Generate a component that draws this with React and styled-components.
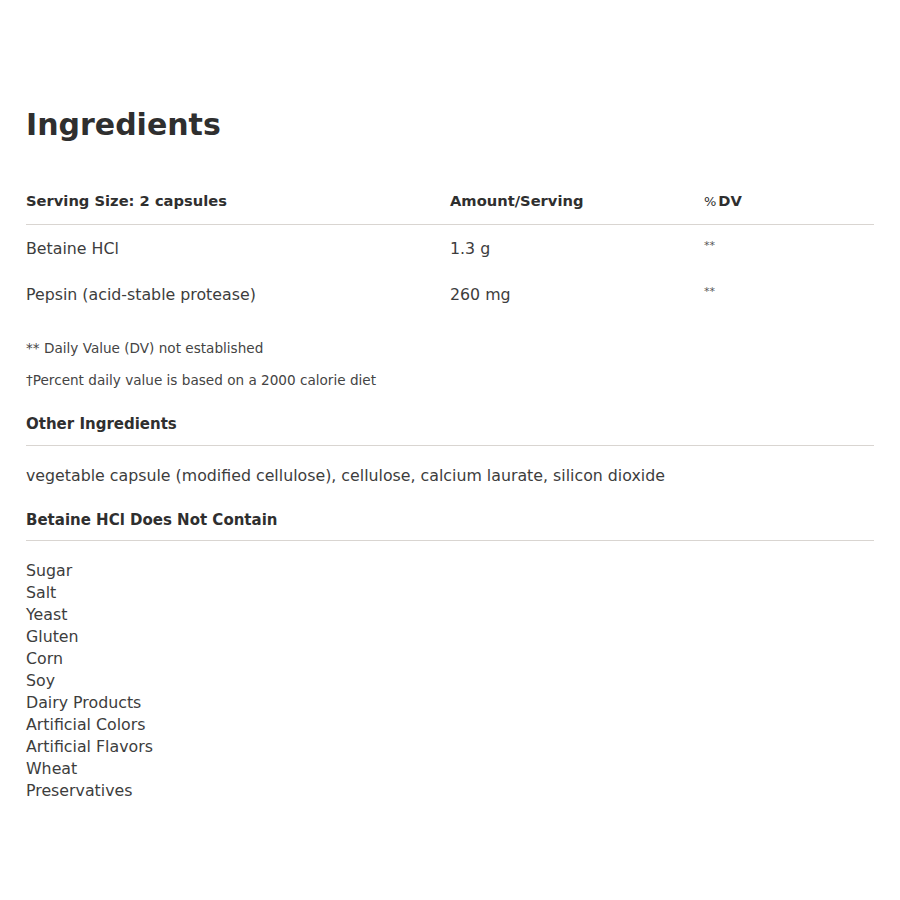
import React from 'react'
import styled, { createGlobalStyle } from 'styled-components'

const GlobalStyle = createGlobalStyle`
  body {
    margin: 0;
    background: #fff;
    font-family: "DejaVu Sans", "Open Sans", sans-serif;
    color: #333;
  }
`

const rows = [
  { name: 'Betaine HCl', amount: '1.3 g', dv: '**' },
  { name: 'Pepsin (acid-stable protease)', amount: '260 mg', dv: '**' },
]

const excluded = [
  'Sugar', 'Salt', 'Yeast', 'Gluten', 'Corn', 'Soy', 'Dairy Products',
  'Artificial Colors', 'Artificial Flavors', 'Wheat', 'Preservatives',
]

const Page = styled.div`
  padding: 100px 26px 60px;
`

const Title = styled.h1`
  margin: 0;
  font-size: 30px;
  line-height: 50px;
  font-weight: 700;
  color: #2f2f2f;
`

const Table = styled.div`
  margin-top: 26px;
`

const Row = styled.div`
  display: grid;
  grid-template-columns: 424px 254px 1fr;
  align-items: center;
  height: ${p => (p.$head ? '48px' : '46px')};
  border-bottom: ${p => (p.$head ? '1px solid #d9d5d1' : 'none')};
`

const HeadCell = styled.div`
  font-size: 14.7px;
  font-weight: 700;
  color: #2f2f2f;
`

const Percent = styled.span`
  font-weight: 400;
  font-size: 13px;
  margin-right: 2px;
`

const Cell = styled.div`
  font-size: 15.8px;
  color: #3d3d3d;
`

const Stars = styled.div`
  font-size: 11px;
  color: #555;
  align-self: start;
  padding-top: 14px;
`

const Notes = styled.div`
  margin-top: 21px;
  display: flex;
  flex-direction: column;
  gap: 12px;
`

const Note = styled.p`
  margin: 0;
  font-size: 13.6px;
  line-height: 20px;
  color: #444;
`

const SectionTitle = styled.h2`
  margin: ${p => p.$top} 0 0;
  padding-bottom: ${p => p.$pad};
  font-size: 15px;
  line-height: 20px;
  font-weight: 700;
  color: #2f2f2f;
  border-bottom: 1px solid #d9d5d1;
`

const Paragraph = styled.p`
  margin: 18px 0 0;
  font-size: 15.8px;
  line-height: 24px;
  color: #3d3d3d;
`

const List = styled.ul`
  list-style: none;
  margin: 19px 0 0;
  padding: 0;
`

const Item = styled.li`
  font-size: 15.8px;
  line-height: 22px;
  color: #3d3d3d;
`

export default function App() {
  return (
    <>
      <GlobalStyle />
      <Page>
        <Title>Ingredients</Title>
        <Table>
          <Row $head>
            <HeadCell>Serving Size: 2 capsules</HeadCell>
            <HeadCell>Amount/Serving</HeadCell>
            <HeadCell><Percent>%</Percent>DV</HeadCell>
          </Row>
          {rows.map(r => (
            <Row key={r.name}>
              <Cell>{r.name}</Cell>
              <Cell>{r.amount}</Cell>
              <Stars>{r.dv}</Stars>
            </Row>
          ))}
        </Table>
        <Notes>
          <Note>** Daily Value (DV) not established</Note>
          <Note>†Percent daily value is based on a 2000 calorie diet</Note>
        </Notes>
        <SectionTitle $top="24px" $pad="11px">Other Ingredients</SectionTitle>
        <Paragraph>
          vegetable capsule (modified cellulose), cellulose, calcium laurate, silicon dioxide
        </Paragraph>
        <SectionTitle $top="22px" $pad="10px">Betaine HCl Does Not Contain</SectionTitle>
        <List>
          {excluded.map(x => <Item key={x}>{x}</Item>)}
        </List>
      </Page>
    </>
  )
}
